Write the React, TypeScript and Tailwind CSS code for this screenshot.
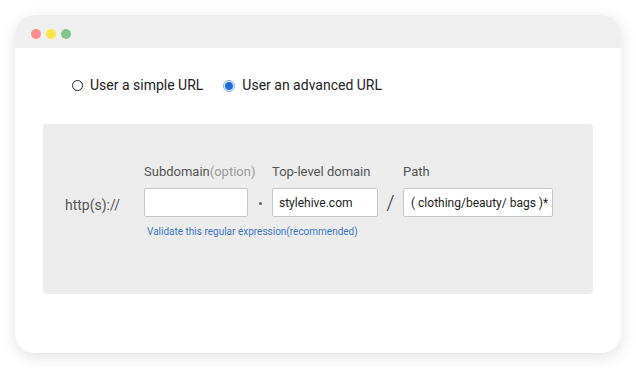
const Radio = ({ checked, label }: { checked?: boolean; label: string }) => {
  return (
    <label className="flex items-center gap-[7px]">
      {checked ? (
        <span className="flex h-[12px] w-[12px] items-center justify-center rounded-full border border-[#7aa9ea]">
          <span className="h-[8px] w-[8px] rounded-full bg-[#1a6fe0]" />
        </span>
      ) : (
        <span className="h-[11px] w-[11px] rounded-full border-[1.5px] border-[#222]" />
      )}
      <span className="text-[14px] text-[#222]">{label}</span>
    </label>
  );
};

export default function App() {
  return (
    <div className="h-[368px] w-[636px] bg-white pl-[15px] pr-[15px] pt-[15px] font-['Roboto',sans-serif]">
      <div className="h-[338px] w-[606px] overflow-hidden rounded-[20px] bg-white shadow-[0_4px_16px_rgba(0,0,0,0.12)]">
        <div className="flex h-[33px] items-center gap-[5px] bg-[#efefef] pl-[16px] pt-[4px]">
          <span className="h-[10px] w-[10px] rounded-full bg-[#fe8c8c]" />
          <span className="h-[10px] w-[10px] rounded-full bg-[#fde546]" />
          <span className="h-[10px] w-[10px] rounded-full bg-[#7ec98a]" />
        </div>
        <div className="flex gap-[20px] pl-[57px] pt-[27px]">
          <Radio label="User a simple URL" />
          <Radio checked label="User an advanced URL" />
        </div>
        <div className="ml-[28px] mt-[28px] h-[170px] w-[550px] rounded-[4px] bg-[#ececec] pl-[22px] pt-[40px]">
          <div className="flex items-start whitespace-nowrap">
            <div className="w-[79px] shrink-0 pt-[31px] text-[14px] text-[#555]">http(s)://</div>
            <div className="flex w-[104px] shrink-0 flex-col">
              <div className="h-[24px] text-[13px] leading-[16px] text-[#555]">
                Subdomain<span className="text-[#999]">(option)</span>
              </div>
              <div className="h-[29px] w-[104px] rounded-[2px] border border-[#c6c6c6] bg-white" />
              <div className="pl-[3px] pt-[7px] text-[10px] text-[#3a78c6]">
                Validate this regular expression(recommended)
              </div>
            </div>
            <div className="flex w-[24px] shrink-0 justify-center pt-[38px]">
              <span className="h-[3px] w-[3px] rounded-full bg-[#666]" />
            </div>
            <div className="flex w-[106px] shrink-0 flex-col">
              <div className="h-[24px] text-[13px] leading-[16px] text-[#555]">Top-level domain</div>
              <div className="flex h-[29px] w-[106px] items-center rounded-[2px] border border-[#c6c6c6] bg-white pl-[6px] text-[12px] text-[#222]">
                stylehive.com
              </div>
            </div>
            <div className="flex w-[25px] shrink-0 justify-center pt-[24px] text-[20px] font-light text-[#333]">/</div>
            <div className="flex w-[150px] shrink-0 flex-col">
              <div className="h-[24px] text-[13px] leading-[16px] text-[#555]">Path</div>
              <div className="flex h-[29px] w-[150px] items-center rounded-[2px] border border-[#c6c6c6] bg-white pl-[7px] text-[12px] text-[#222]">
                ( clothing/beauty/ bags )*
              </div>
            </div>
          </div>
        </div>
      </div>
    </div>
  );
}
